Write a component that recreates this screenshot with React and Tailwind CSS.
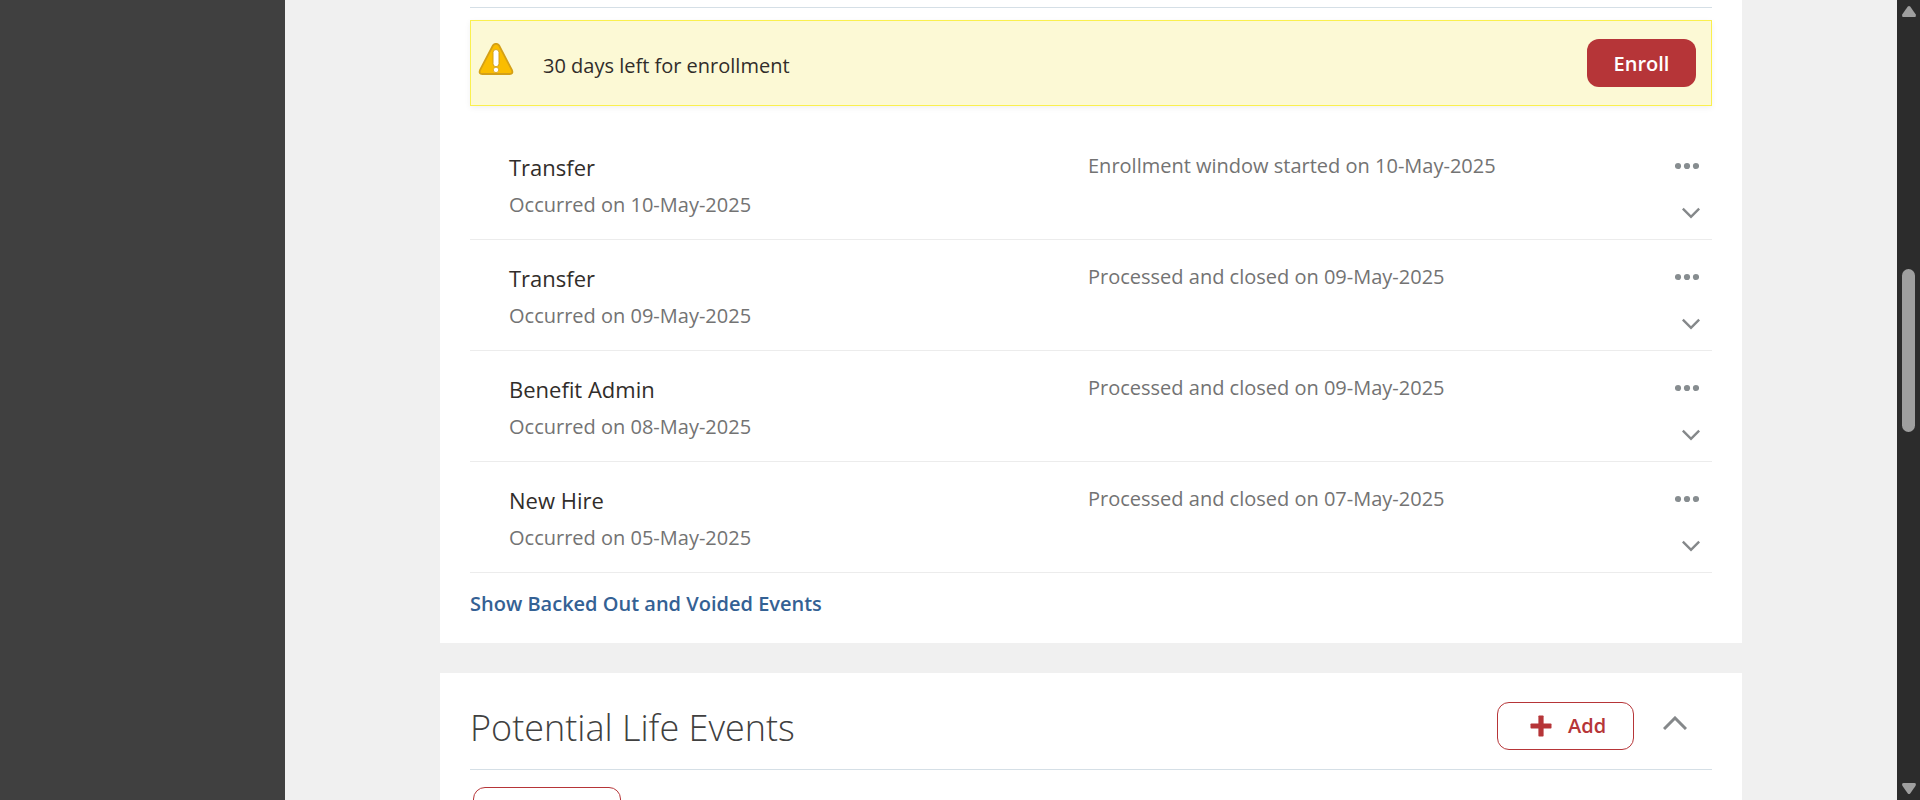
const events = [
  { name: "Transfer", occurred: "Occurred on 10-May-2025", status: "Enrollment window started on 10-May-2025" },
  { name: "Transfer", occurred: "Occurred on 09-May-2025", status: "Processed and closed on 09-May-2025" },
  { name: "Benefit Admin", occurred: "Occurred on 08-May-2025", status: "Processed and closed on 09-May-2025" },
  { name: "New Hire", occurred: "Occurred on 05-May-2025", status: "Processed and closed on 07-May-2025" },
];

function WarningIcon() {
  return (
    <svg className="h-8 w-9 shrink-0" viewBox="0 0 36 32" aria-hidden="true">
      <path d="M15 2.4 Q18 -0.8 21 2.4 L34 27.2 Q35.4 30.9 31.8 31 H4.2 Q0.6 30.9 2 27.2 Z" fill="#fabd00" stroke="#d4a017" strokeWidth="1.8" />
      <rect x="15" y="6.6" width="6" height="17" rx="2.8" fill="#fff" stroke="#d4a017" strokeWidth="1" />
      <circle cx="18" cy="26.9" r="2.7" fill="#fff" stroke="#d4a017" strokeWidth="0.8" />
    </svg>
  );
}

function DotsIcon() {
  return (
    <svg className="h-2 w-6" viewBox="0 0 24 8" fill="#878d90" aria-hidden="true">
      <circle cx="3" cy="4" r="3.1" />
      <circle cx="12" cy="4" r="3.1" />
      <circle cx="21" cy="4" r="3.1" />
    </svg>
  );
}

function ChevronDown() {
  return (
    <svg className="h-3 w-[18px]" viewBox="0 0 18 12" fill="none" stroke="#85888a" strokeWidth="2.5" aria-hidden="true">
      <path d="M0.8 1.6 L9 9.8 L17.2 1.6" />
    </svg>
  );
}

function ChevronUp() {
  return (
    <svg className="h-[14px] w-6" viewBox="0 0 24 14" fill="none" stroke="#85888a" strokeWidth="3" aria-hidden="true">
      <path d="M1 13 L12 2 L23 13" />
    </svg>
  );
}

function PlusIcon() {
  return (
    <svg className="h-[22px] w-[22px]" viewBox="0 0 22 22" fill="#b63538" aria-hidden="true">
      <rect x="8.4" y="0.5" width="5.2" height="21" rx="0.8" />
      <rect x="0.5" y="8.4" width="21" height="5.2" rx="0.8" />
    </svg>
  );
}

function EventRow({ event }) {
  return (
    <li className="grid h-[111px] grid-cols-[1fr_1fr_45px] border-b border-[#ececec] pl-[39px]">
      <div className="pt-[22px]">
        <h3 className="text-[22px] leading-8 text-[#312d2a]">{event.name}</h3>
        <p className="mt-2 text-[20px] leading-7 text-[#737373]">{event.occurred}</p>
      </div>
      <p className="pt-[23px] text-[20px] leading-7 text-[#737373]">{event.status}</p>
      <div className="flex flex-col items-end pr-3 pt-[27px]">
        <button type="button" aria-label="Actions" className="mr-px flex h-5 items-center">
          <DotsIcon />
        </button>
        <button type="button" aria-label="Expand" className="mt-[27px] flex h-5 items-center">
          <ChevronDown />
        </button>
      </div>
    </li>
  );
}

function Scrollbar() {
  return (
    <div className="flex w-[23px] shrink-0 flex-col items-center bg-[#2c2c2c] py-[5px]" aria-hidden="true">
      <svg className="h-3 w-4" viewBox="0 0 16 12" fill="#9f9f9f">
        <path d="M6.6 1.8 Q8 0 9.4 1.8 L14.6 9.2 Q15.6 12 13.4 12 H2.6 Q0.4 12 1.4 9.2 Z" />
      </svg>
      <div className="w-[13px] flex-1 pt-[252px]">
        <div className="h-[163px] rounded-full bg-[#9f9f9f]" />
      </div>
      <svg className="h-3 w-4" viewBox="0 0 16 12" fill="#9f9f9f">
        <path d="M6.6 10.2 Q8 12 9.4 10.2 L14.6 2.8 Q15.6 0 13.4 0 H2.6 Q0.4 0 1.4 2.8 Z" />
      </svg>
    </div>
  );
}

export default function App() {
  return (
    <div className="flex h-screen overflow-hidden bg-[#f0f0f0] font-['Open_Sans','Noto_Sans',sans-serif]">
      <aside className="w-[285px] shrink-0 bg-[#404040]" />
      <main className="flex min-w-0 flex-1 flex-col gap-[30px] overflow-hidden px-[155px]">
        <section className="shrink-0 bg-white px-[30px] pb-[23px] pt-[7px]">
          <div className="border-t border-[#d5dfe6]" />
          <div className="mt-3 flex h-[86px] items-center border border-[#faf04e] bg-[#fcf9d5] pl-[7px] pr-[15px] shadow-[0_2px_6px_rgba(0,0,0,0.06)]">
            <div className="-mt-1 mb-auto pt-[26px]">
              <WarningIcon />
            </div>
            <p className="ml-[29px] flex-1 pt-1.5 text-[20px] leading-7 text-[#312d2a]">30 days left for enrollment</p>
            <button type="button" className="h-12 w-[109px] rounded-xl bg-[#b63538] pt-0.5 text-[20px] font-semibold text-white">
              Enroll
            </button>
          </div>
          <ul className="pt-[23px]">
            {events.map((event) => (
              <EventRow key={event.occurred} event={event} />
            ))}
          </ul>
          <a href="#events" className="mt-[15px] inline-block text-[20px] font-semibold leading-8 text-[#346194]">
            Show Backed Out and Voided Events
          </a>
        </section>

        <section className="shrink-0 bg-white px-[30px] pb-[30px] pt-[29px]">
          <header className="flex h-[68px] items-start border-b border-[#d5dfe6] pr-[25px]">
            <h2 className="flex-1 text-[36px] font-light leading-[52px] text-[#404040]">Potential Life Events</h2>
            <button type="button" className="flex h-12 w-[137px] items-center gap-4 rounded-xl border border-[#b63538] pl-8 text-[20px] font-semibold text-[#b63538]">
              <PlusIcon />
              Add
            </button>
            <button type="button" aria-label="Collapse" className="ml-[29px] mt-[14px]">
              <ChevronUp />
            </button>
          </header>
          <button type="button" aria-label="More life events" className="ml-[3px] mt-[17px] block h-12 w-[148px] rounded-xl border border-[#b63538]" />
        </section>
      </main>
      <Scrollbar />
    </div>
  );
}
